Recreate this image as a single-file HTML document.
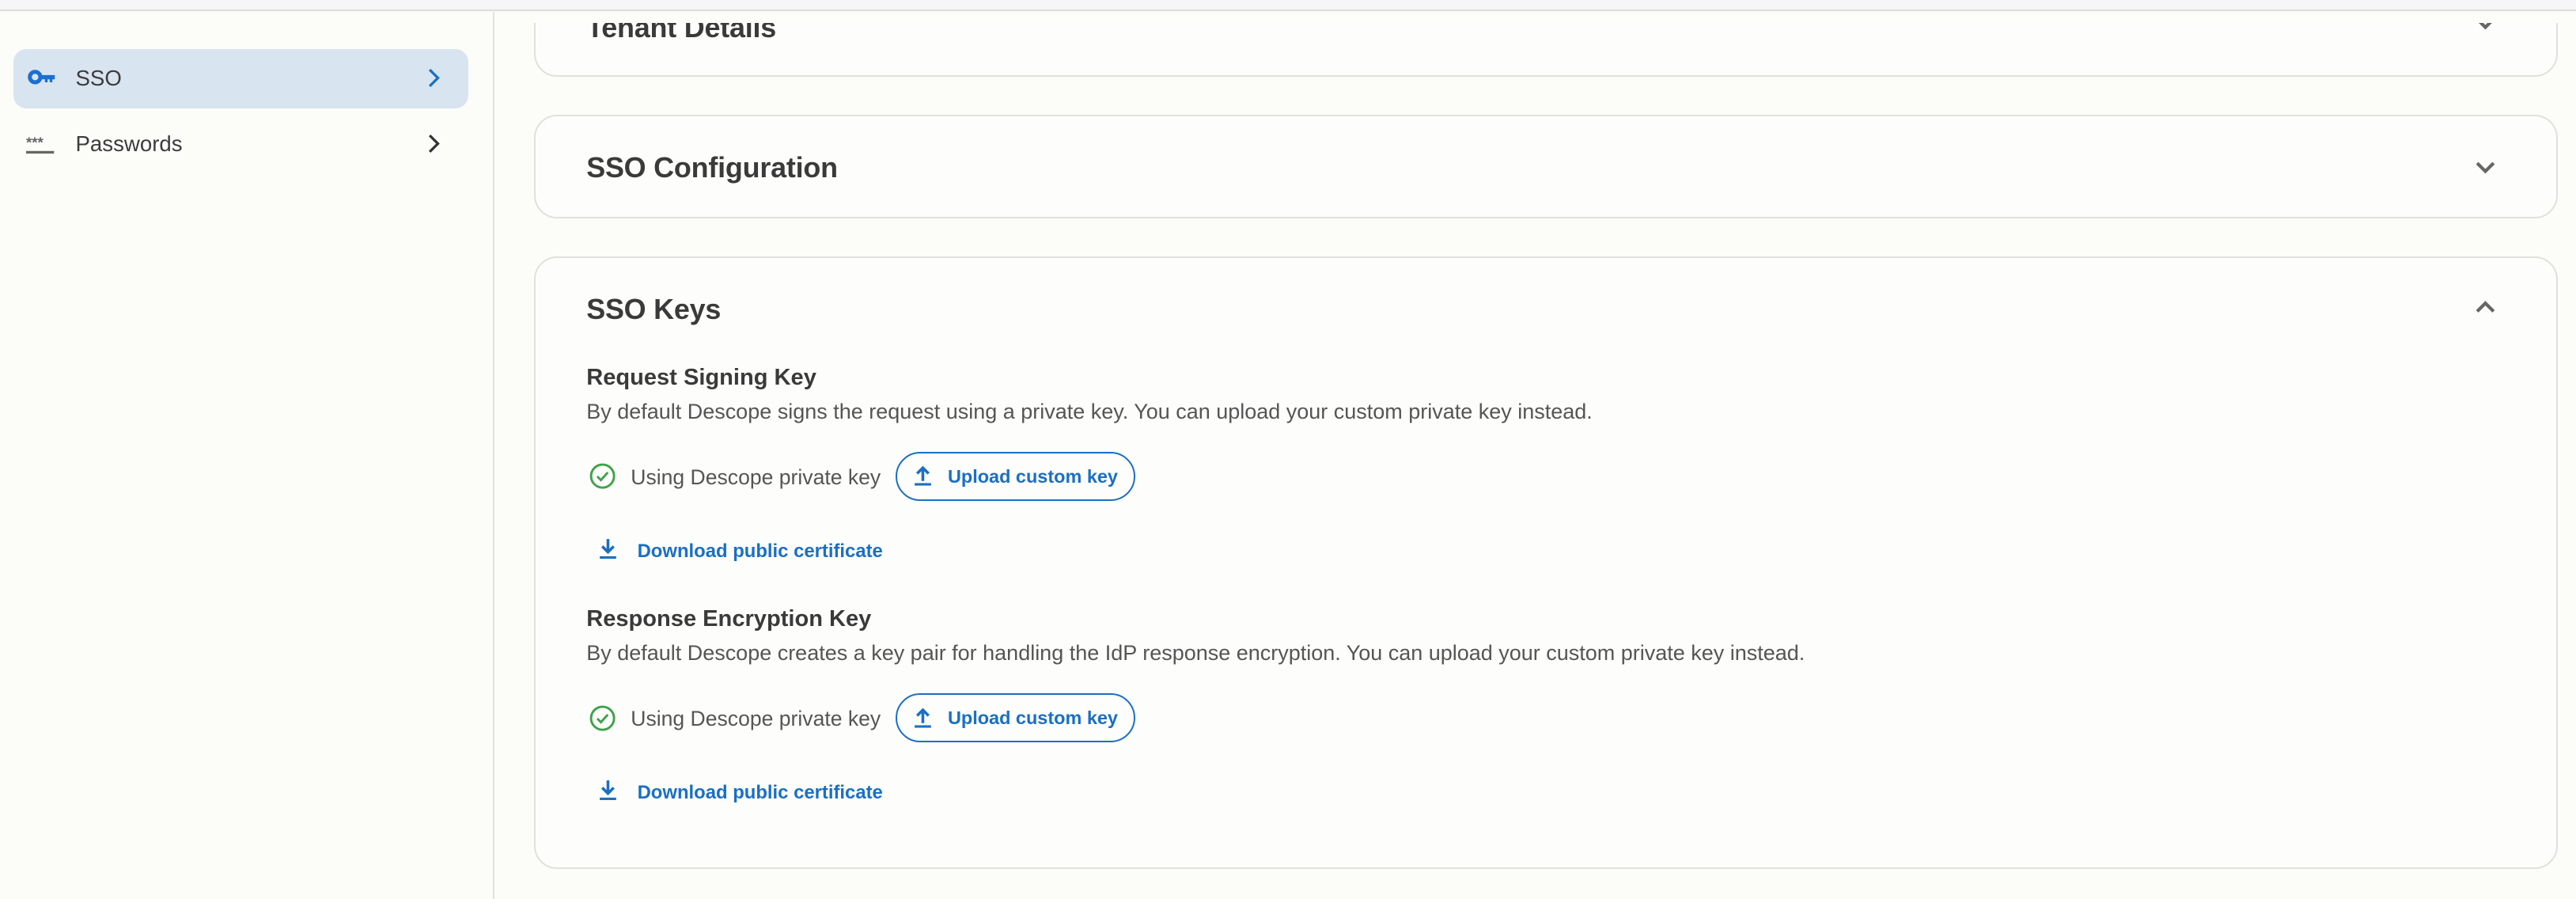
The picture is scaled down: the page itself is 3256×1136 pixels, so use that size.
<!DOCTYPE html>
<html><head><meta charset="utf-8"><style>
html,body{margin:0;padding:0;}
body{width:1568px;height:536.5px;zoom:2.0765;background:#fcfcf9;font-family:"Liberation Sans",Arial,sans-serif;color:#3c3c3c;position:relative;overflow:hidden;}
.top{position:absolute;left:0;top:0;width:1568px;height:6px;background:#f6f6f8;border-bottom:1px solid #dcdcdc;}
.side{position:absolute;left:0;top:7px;width:300px;height:540px;border-right:1px solid #e2e2e2;}
.item{position:absolute;left:8px;width:277px;height:36px;border-radius:8px;}
.item .t{position:absolute;left:38px;top:10px;font-size:13.3px;}
.item svg{position:absolute;}
.main{position:absolute;left:301px;top:14px;right:0;bottom:0;overflow:hidden;}
.card{position:absolute;left:24px;width:1230px;border:1px solid #e0e0dc;border-radius:14px;background:#fdfdfb;}
.ttl{position:absolute;left:31px;font-size:17.3px;font-weight:bold;color:#3a3a3a;letter-spacing:-.1px;}
.chev{position:absolute;right:37px;}
.h{position:absolute;left:31px;font-size:14px;font-weight:bold;color:#3a3a3a;}
.d{position:absolute;left:31px;font-size:13px;color:#555;letter-spacing:0;}
.row{position:absolute;left:31px;height:30px;}
.row .ok{position:absolute;left:2px;top:7px;}
.row .u{position:absolute;left:27px;top:8px;font-size:12.8px;color:#555;white-space:nowrap;}
.btn{position:absolute;left:188px;top:0;width:144px;height:28px;border:1px solid #1a6fc4;border-radius:15px;}
.btn span{position:absolute;left:31px;top:7.5px;font-size:11.3px;font-weight:bold;color:#1a6fc4;white-space:nowrap;}
.btn svg{position:absolute;left:10px;top:7px;}
.dl{position:absolute;left:38px;height:20px;}
.dl span{position:absolute;left:24px;top:3px;font-size:11.5px;font-weight:bold;color:#1a6fc4;white-space:nowrap;}
.dl svg{position:absolute;left:0;top:1px;}
</style></head><body>
<div class="top"></div>
<div class="side">
  <div class="item" style="top:23px;background:#d8e4f0;">
    <svg style="left:9px;top:12px" width="17" height="10" viewBox="0 0 17 10"><circle cx="4.5" cy="5" r="3.2" fill="none" stroke="#1a6fd0" stroke-width="2.4"/><path d="M7.5 3.8h9v2.6h-1.5v1.8h-1.6v-1.8h-1.3v1.8h-1.6v-1.8h-3z" fill="#1a6fd0"/></svg>
    <span class="t">SSO</span>
    <svg style="left:252px;top:11px" width="8" height="13" viewBox="0 0 8 13"><path d="M1.5 1.5l5 5-5 5" fill="none" stroke="#1a6fc4" stroke-width="1.6"/></svg>
  </div>
  <div class="item" style="top:63px;">
    <svg style="left:8px;top:12px" width="18" height="13" viewBox="0 0 18 13"><text x="0" y="8" font-size="9" font-family="Liberation Sans" fill="#666" font-weight="bold">***</text><rect x="0" y="10" width="17" height="1.6" fill="#666"/></svg>
    <span class="t">Passwords</span>
    <svg style="left:252px;top:11px" width="8" height="13" viewBox="0 0 8 13"><path d="M1.5 1.5l5 5-5 5" fill="none" stroke="#333" stroke-width="1.6"/></svg>
  </div>
</div>
<div class="main">
  <div class="card" style="top:-40px;height:71px;">
    <div class="ttl" style="top:32px;">Tenant Details</div>
    <svg class="chev" style="top:35px" width="12" height="8" viewBox="0 0 12 8"><path d="M1 1.5l5 5 5-5" fill="none" stroke="#666" stroke-width="2"/></svg>
  </div>
  <div class="card" style="top:56px;height:61px;">
    <div class="ttl" style="top:21px;">SSO Configuration</div>
    <svg class="chev" style="top:27px" width="12" height="8" viewBox="0 0 12 8"><path d="M1 1.5l5 5 5-5" fill="none" stroke="#666" stroke-width="2"/></svg>
  </div>
  <div class="card" style="top:142px;height:371px;">
    <div class="ttl" style="top:21px;">SSO Keys</div>
    <svg class="chev" style="top:26px" width="12" height="8" viewBox="0 0 12 8"><path d="M1 6.5l5-5 5 5" fill="none" stroke="#666" stroke-width="2"/></svg>
    <div class="h" style="top:65px;">Request Signing Key</div>
    <div class="d" style="top:86px;">By default Descope signs the request using a private key. You can upload your custom private key instead.</div>
    <div class="row" style="top:118px;">
      <svg class="ok" width="16" height="16" viewBox="0 0 16 16"><circle cx="8" cy="8" r="7" fill="none" stroke="#3fa24a" stroke-width="1.4"/><path d="M4.8 8.2l2.2 2.2 4.2-4.6" fill="none" stroke="#3fa24a" stroke-width="1.4"/></svg>
      <span class="u">Using Descope private key</span>
      <div class="btn"><svg width="12" height="13" viewBox="0 0 12 13"><path d="M6 10V2M2.5 5.5L6 2l3.5 3.5" fill="none" stroke="#1a6fc4" stroke-width="1.7"/><rect x="1" y="11.3" width="10" height="1.5" fill="#1a6fc4"/></svg><span>Upload custom key</span></div>
    </div>
    <div class="dl" style="top:169px;"><svg width="12" height="14" viewBox="0 0 12 14"><path d="M6 1v8M2.5 5.5L6 9l3.5-3.5" fill="none" stroke="#1a6fc4" stroke-width="1.7"/><rect x="1" y="11.5" width="10" height="1.5" fill="#1a6fc4"/></svg><span>Download public certificate</span></div>
    <div class="h" style="top:212px;">Response Encryption Key</div>
    <div class="d" style="top:233px;">By default Descope creates a key pair for handling the IdP response encryption. You can upload your custom private key instead.</div>
    <div class="row" style="top:265px;">
      <svg class="ok" width="16" height="16" viewBox="0 0 16 16"><circle cx="8" cy="8" r="7" fill="none" stroke="#3fa24a" stroke-width="1.4"/><path d="M4.8 8.2l2.2 2.2 4.2-4.6" fill="none" stroke="#3fa24a" stroke-width="1.4"/></svg>
      <span class="u">Using Descope private key</span>
      <div class="btn"><svg width="12" height="13" viewBox="0 0 12 13"><path d="M6 10V2M2.5 5.5L6 2l3.5 3.5" fill="none" stroke="#1a6fc4" stroke-width="1.7"/><rect x="1" y="11.3" width="10" height="1.5" fill="#1a6fc4"/></svg><span>Upload custom key</span></div>
    </div>
    <div class="dl" style="top:316px;"><svg width="12" height="14" viewBox="0 0 12 14"><path d="M6 1v8M2.5 5.5L6 9l3.5-3.5" fill="none" stroke="#1a6fc4" stroke-width="1.7"/><rect x="1" y="11.5" width="10" height="1.5" fill="#1a6fc4"/></svg><span>Download public certificate</span></div>
  </div>
</div>
</body></html>
